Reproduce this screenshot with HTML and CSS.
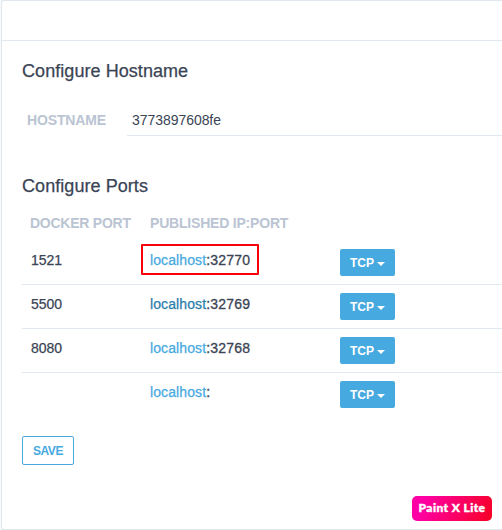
FILE: index.html
```html
<!DOCTYPE html>
<html lang="en">
<head>
<meta charset="utf-8">
<title>Container settings</title>
<link rel="stylesheet" href="styles.css">
</head>
<body>
<main class="panel">
  <header class="panel-header"></header>
  <div class="panel-body">
    <h3 class="title title-host">Configure Hostname</h3>
    <div class="host-row">
      <span class="label label-host">HOSTNAME</span>
      <div class="host-field"><span class="host-value">3773897608fe</span></div>
    </div>
    <h3 class="title title-ports">Configure Ports</h3>
    <div class="ports">
      <div class="ports-head">
        <span class="label label-docker">DOCKER PORT</span>
        <span class="label label-published">PUBLISHED IP:PORT</span>
      </div>
      <div class="port-row">
        <span class="port">1521</span>
        <span class="address highlight"><a>localhost</a><span class="number">:32770</span></span>
        <button class="tcp">TCP<i class="caret"></i></button>
      </div>
      <div class="port-row">
        <span class="port">5500</span>
        <span class="address"><a class="hover">localhost</a><span class="number">:32769</span></span>
        <button class="tcp">TCP<i class="caret"></i></button>
      </div>
      <div class="port-row">
        <span class="port">8080</span>
        <span class="address"><a>localhost</a><span class="number">:32768</span></span>
        <button class="tcp">TCP<i class="caret"></i></button>
      </div>
      <div class="port-row">
        <span class="port"></span>
        <span class="address"><a>localhost</a><span class="number">:</span></span>
        <button class="tcp">TCP<i class="caret"></i></button>
      </div>
    </div>
    <button class="save">SAVE</button>
  </div>
  <div class="watermark">Paint X Lite</div>
</main>
</body>
</html>
```
FILE: styles.css
```css
* { box-sizing: border-box; }

body {
  margin: 0;
  padding-left: 1px;
  height: 530px;
  overflow: hidden;
  background: #f7f9fb;
  font-family: "Liberation Sans", Arial, sans-serif;
  font-size: 14px;
  color: #3a4454;
}

.panel {
  position: relative;
  height: 530px;
  background: #fff;
  border: 1px solid #e0e7ee;
  border-right: 0;
  border-radius: 3px 0 0 3px;
}

.panel-header {
  height: 40px;
  border-bottom: 1px solid #e0e7ee;
}

.panel-body { padding: 19px 0 0 20px; }

.title {
  margin: 0;
  font-size: 18px;
  font-weight: 400;
  line-height: 22px;
  -webkit-text-stroke: .25px #3a4454;
}

.title-host { letter-spacing: .06px; }
.title-ports { margin-top: 39px; letter-spacing: .06px; }

.host-row {
  display: flex;
  height: 32px;
  margin-top: 22px;
}

.label {
  font-weight: 700;
  line-height: 32px;
  color: #bac4d2;
  white-space: nowrap;
}

.label-host {
  width: 105px;
  padding-left: 5px;
  letter-spacing: -.15px;
}

.host-field {
  flex: 1;
  padding-left: 5px;
  line-height: 32px;
  border-bottom: 1px solid #e0e7ee;
}

.host-value { letter-spacing: -.05px; }

.ports-head,
.port-row {
  display: grid;
  grid-template-columns: 119px 199px 55px;
}

.ports-head {
  height: 44px;
  padding-top: 9px;
}

.ports-head .label {
  padding-left: 8px;
  line-height: 34px;
}

.ports-head .label-docker { letter-spacing: -.25px; }
.ports-head .label-published { padding-left: 9px; letter-spacing: -.2px; }

.port-row {
  height: 44px;
  padding-top: 8px;
  border-bottom: 1px solid #e0e7ee;
}

.port-row:last-child { border-bottom: 0; }

.port,
.address {
  line-height: 22px;
  -webkit-text-stroke: .25px currentColor;
}

.port { padding-left: 9px; }

.address {
  height: 31px;
  padding-left: 9px;
  white-space: nowrap;
}

.address a { color: #46a9df; letter-spacing: .1px; }
.address a.hover { color: #2a7dab; }

.number {
  letter-spacing: .2px;
  -webkit-text-stroke-width: .3px;
}

.highlight {
  width: 118px;
  height: 31px;
  margin-top: -5px;
  padding: 3px 0 0 7px;
  border: 2px solid #f5000c;
  border-radius: 1px;
}

.tcp {
  grid-column: 3;
  display: flex;
  align-items: center;
  width: 55px;
  height: 27px;
  padding: 0 0 0 10px;
  border: 0;
  border-radius: 2px;
  background: #46a9df;
  color: #fff;
  font: 700 12px "Liberation Sans", Arial, sans-serif;
}

.caret {
  width: 0;
  height: 0;
  margin: 2px 0 0 3px;
  border-top: 4px solid #fff;
  border-left: 4px solid transparent;
  border-right: 4px solid transparent;
}

.save {
  display: block;
  width: 52px;
  height: 29px;
  margin-top: 19px;
  padding: 0;
  border: 1px solid #46a9df;
  border-radius: 2px;
  background: #fff;
  color: #46a9df;
  font: 700 12px "Liberation Sans", Arial, sans-serif;
  letter-spacing: -.5px;
}

.watermark {
  position: absolute;
  right: 10px;
  bottom: 8px;
  width: 80px;
  height: 25px;
  border-radius: 5px;
  background: linear-gradient(110deg, #ff00a5 15%, #f60024);
  color: #fff;
  font: 900 12px/24px Lato, sans-serif;
  -webkit-text-stroke: .4px #fff;
  letter-spacing: .4px;
  text-align: center;
}
```
